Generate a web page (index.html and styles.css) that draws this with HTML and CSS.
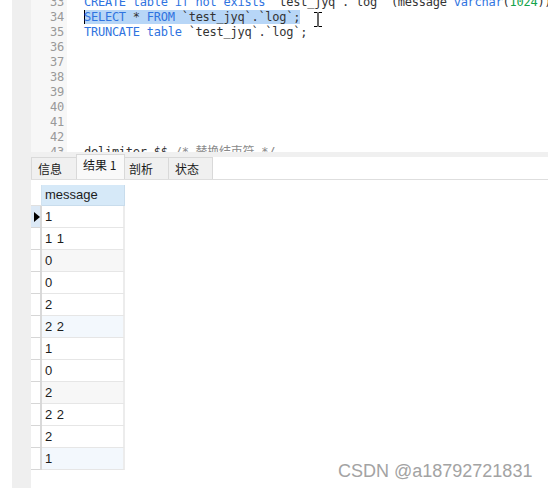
FILE: index.html
```html
<!DOCTYPE html>
<html>
<head>
<meta charset="utf-8">
<link rel="stylesheet" href="styles.css">
</head>
<body>
<div class="app">
  <div class="edge"></div>
  <div class="strip"></div>
  <div class="main">
    <div class="editor">
      <div class="gutter">
        <div>33</div><div>34</div><div>35</div><div>36</div><div>37</div><div>38</div><div>39</div><div>40</div><div>41</div><div>42</div><div>43</div>
      </div>
      <div class="code">
        <div class="ln"><span class="kw">CREATE table if not exists</span> `test_jyq`.`log` (message <span class="kw">varchar</span>(<span class="num">1024</span>));</div>
        <div class="ln"><span class="sel"><span class="kw">SELECT</span> * <span class="kw">FROM</span> `test_jyq`.`log`;</span></div>
        <div class="ln"><span class="kw">TRUNCATE table</span> `test_jyq`.`log`;</div>
        <div class="ln"></div>
        <div class="ln"></div>
        <div class="ln"></div>
        <div class="ln"></div>
        <div class="ln"></div>
        <div class="ln"></div>
        <div class="ln"></div>
        <div class="ln">delimiter $$ <span class="cm">/* 替换结束符 */</span></div>
      </div>
      <svg class="ibeam" width="10" height="17" viewBox="0 0 10 17">
        <path d="M1 1.5h3.5M5.5 1.5h3.5M5 2v13M1 15.5h3.5M5.5 15.5h3.5" stroke="#000" stroke-width="1.2" fill="none"/>
      </svg>
    </div>
    <div class="tabbar">
      <div class="tab t1">信息</div>
      <div class="tab active t2">结果 1</div>
      <div class="tab t3">剖析</div>
      <div class="tab t4">状态</div>
    </div>
    <div class="results">
      <div class="grid">
        <div class="ind head"></div><div class="cell head">message</div>
        <div class="ind cur"><span class="tri"></span></div><div class="cell">1</div>
        <div class="ind"></div><div class="cell">1 1</div>
        <div class="ind"></div><div class="cell gray">0</div>
        <div class="ind"></div><div class="cell">0</div>
        <div class="ind"></div><div class="cell">2</div>
        <div class="ind"></div><div class="cell blue">2 2</div>
        <div class="ind"></div><div class="cell">1</div>
        <div class="ind"></div><div class="cell">0</div>
        <div class="ind"></div><div class="cell gray">2</div>
        <div class="ind"></div><div class="cell">2 2</div>
        <div class="ind"></div><div class="cell">2</div>
        <div class="ind"></div><div class="cell blue">1</div>
      </div>
    </div>
  </div>
  <div class="watermark">CSDN @a18792721831</div>
</div>
</body>
</html>
```

FILE: styles.css
```css
html, body {
  margin: 0;
  padding: 0;
  background: #fff;
}
.app {
  position: relative;
  display: flex;
  width: 548px;
  height: 488px;
  overflow: hidden;
}
.edge {
  width: 12px;
  flex: none;
  background: #fff;
}
.strip {
  width: 19px;
  flex: none;
  background: #efefef;
}
.main {
  flex: 1;
  display: flex;
  flex-direction: column;
  min-width: 0;
}
.editor {
  position: relative;
  height: 152px;
  overflow: hidden;
  display: flex;
  flex: none;
  font-family: "DejaVu Sans Mono", "Noto Sans CJK SC", monospace;
  font-size: 12px;
  letter-spacing: -0.25px;
  line-height: 15px;
}
.gutter {
  width: 33px;
  padding-right: 3px;
  margin-top: -5px;
  background: #f7f7f7;
  color: #999;
  text-align: right;
  flex: none;
}
.code {
  margin-top: -5px;
  padding-left: 17px;
  color: #333;
  flex: 1;
  min-width: 0;
}
.ln {
  height: 15px;
  white-space: pre;
}
.kw { color: #2f73e0; }
.num { color: #14a34a; }
.cm { color: #8a8a8a; }
.sel {
  display: inline-block;
  background: #b7d6f7;
  box-shadow: inset 1px 0 0 #000;
  height: 14px;
  vertical-align: top;
}
.ibeam {
  position: absolute;
  left: 282px;
  top: 11px;
}
.tabbar {
  height: 28px;
  flex: none;
  display: flex;
  align-items: flex-end;
  background: linear-gradient(#f0f0f0 0, #f0f0f0 5px, #fff 5px);
  border-bottom: 1px solid #dedede;
  box-sizing: border-box;
  font-family: "Noto Sans CJK SC", sans-serif;
  font-size: 12px;
  color: #1a1a1a;
}
.tab {
  height: 22px;
  box-sizing: border-box;
  background: #f0f0f0;
  border: 1px solid #d9d9d9;
  border-bottom: none;
  margin-right: -1px;
  padding-left: 6px;
  line-height: 21px;
}
.t1 { width: 46px; }
.t2 { width: 49px; }
.t3 { width: 45px; padding-left: 4px; }
.t4 { width: 45px; }
.tab.active {
  height: 25px;
  background: #f9f9f9;
  line-height: 20px;
  position: relative;
  z-index: 1;
}
.results {
  flex: 1;
  padding-top: 5px;
}
.grid {
  display: grid;
  grid-template-columns: 11px 83px;
  font-family: "Liberation Sans", Arial, sans-serif;
  font-size: 13px;
  color: #1c1c1c;
}
.ind, .cell {
  height: 22px;
  box-sizing: border-box;
  border-bottom: 1px solid #e6e6e6;
}
.ind {
  border-bottom-color: #d6d6d6;
  border-right: 2px solid #d9d9d9;
  position: relative;
}
.cell {
  border-right: 2px solid #ececec;
  padding-left: 3px;
  line-height: 21px;
  word-spacing: 1px;
}
.ind.head {
  height: 21px;
  border-bottom: 1px solid #e0e0e0;
  border-right: 1px solid #d0e2f0;
}
.cell.head {
  height: 21px;
  background: #d6e9f8;
  border-bottom: 1px solid #c8dcec;
  border-right: 1px solid #c8dcec;
  line-height: 20px;
}
.ind.cur {
  background: #dce9f6;
}
.tri {
  position: absolute;
  left: 3px;
  top: 6px;
  width: 0;
  height: 0;
  border-top: 5px solid transparent;
  border-bottom: 5px solid transparent;
  border-left: 6px solid #000;
}
.cell.gray { background: #f7f7f7; }
.cell.blue { background: #f3f8fd; }
.watermark {
  position: absolute;
  left: 338px;
  top: 461px;
  font-family: "Liberation Sans", Arial, sans-serif;
  font-size: 18px;
  line-height: 20px;
  color: #a3a3a3;
  white-space: nowrap;
}
```
